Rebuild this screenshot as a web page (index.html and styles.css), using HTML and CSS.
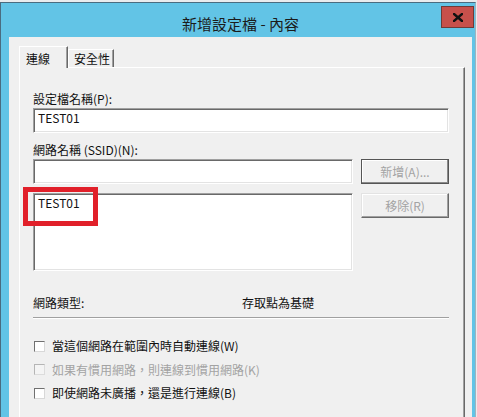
FILE: index.html
```html
<!DOCTYPE html>
<html lang="zh-Hant">
<head>
<meta charset="utf-8">
<title>新增設定檔 - 內容</title>
<link rel="stylesheet" href="styles.css">
</head>
<body>
<div class="window">
  <div class="titlebar">
    <div class="title">新增設定檔 - 內容</div>
    <div class="close" aria-label="關閉">
      <svg width="10" height="9" viewBox="0 0 10 9"><path d="M1 1 L9 8 M9 1 L1 8" stroke="#111" stroke-width="2.4" stroke-linecap="square" fill="none"/></svg>
    </div>
  </div>
  <div class="client">
    <div class="tabs">
      <div class="tab active">連線</div>
      <div class="tab">安全性</div>
    </div>
    <div class="panel">
      <div class="label">設定檔名稱(P):</div>
      <div class="field">TEST01</div>
      <div class="label gap-top">網路名稱 (SSID)(N):</div>
      <div class="ssid-grid">
        <div class="field"></div>
        <div class="btn default">新增(A)...</div>
        <div class="listwrap">
          <div class="field list"><div class="item">TEST01</div></div>
          <div class="highlight"></div>
        </div>
        <div class="btn">移除(R)</div>
      </div>
      <div class="type-row">
        <span class="type-label">網路類型:</span>
        <span>存取點為基礎</span>
      </div>
      <div class="sep"></div>
      <div class="checks">
        <div class="check"><span class="box"></span>當這個網路在範圍內時自動連線(W)</div>
        <div class="check disabled"><span class="box"></span>如果有慣用網路，則連線到慣用網路(K)</div>
        <div class="check"><span class="box"></span>即使網路未廣播，還是進行連線(B)</div>
      </div>
    </div>
  </div>
</div>
</body>
</html>
```
FILE: styles.css
```css
html, body {
  margin: 0;
  padding: 0;
}
body {
  background: #e9ecee;
  font-family: "Noto Sans CJK TC", "Noto Sans", sans-serif;
  font-size: 12px;
  line-height: 16px;
  color: #111;
  overflow: hidden;
  height: 417px;
}
.window {
  margin-top: 2px;
  box-sizing: border-box;
  width: 476px;
  height: 430px;
  background: #62c4e6;
  border-top: 1px solid #4a6c80;
  border-left: 1px solid #4a6c80;
  border-right: 1px solid #9fb3bf;
  padding: 0 3px 0 8px;
}
.titlebar {
  height: 34px;
  display: grid;
  grid-template-columns: 1fr auto 1fr;
  align-items: start;
}
.title {
  grid-column: 2;
  font-size: 15px;
  line-height: 20px;
  padding-top: 11px;
  color: #1b1b1b;
  white-space: nowrap;
}
.close {
  grid-column: 3;
  justify-self: end;
  margin-top: 3px;
  margin-right: -2px;
  width: 33px;
  height: 22px;
  box-sizing: border-box;
  background: #c7504b;
  border: 1px solid #6f3b38;
  display: flex;
  align-items: center;
  justify-content: center;
}
.client {
  background: #f0f0f0;
  height: 400px;
  padding: 9px 7px 0 10px;
}
.tabs {
  display: flex;
  align-items: flex-end;
  height: 21px;
}
.tab {
  box-sizing: border-box;
  height: 18px;
  line-height: 16px;
  padding: 1px 0 0 5px;
  width: 46px;
  border-top: 1px solid #fff;
  border-left: 1px solid #fff;
  border-right: 1px solid #696969;
  box-shadow: inset -1px 0 0 #a0a0a0;
  background: #f0f0f0;
}
.tab.active {
  height: 22px;
  width: 49px;
  padding: 4px 0 0 6px;
  margin-bottom: -1px;
  position: relative;
  z-index: 1;
}
.panel {
  border-top: 1px solid #fff;
  border-left: 1px solid #fff;
  border-right: 1px solid #696969;
  box-shadow: inset -1px 0 0 #a0a0a0;
  padding: 23px 15px 40px 13px;
}
.label {
  margin-bottom: 1px;
  white-space: nowrap;
}
.label.gap-top {
  margin-top: 9px;
}
.field {
  box-sizing: border-box;
  height: 25px;
  background: #fff;
  border-top: 1px solid #a0a0a0;
  border-left: 1px solid #a0a0a0;
  border-bottom: 1px solid #fff;
  border-right: 1px solid #fff;
  box-shadow: inset 1px 1px 0 #696969, inset -1px -1px 0 #e3e3e3;
  padding: 1px 4px 0;
  line-height: 16px;
}
.ssid-grid {
  display: grid;
  grid-template-columns: 1fr 88px;
  grid-template-rows: 25px 78px;
  column-gap: 8px;
  row-gap: 9px;
}
.listwrap {
  position: relative;
}
.field.list {
  height: 78px;
  padding: 1px 4px 0;
}
.item {
  line-height: 16px;
}
.highlight {
  position: absolute;
  left: -10px;
  top: -6px;
  width: 75px;
  height: 39px;
  box-sizing: border-box;
  border: 5px solid #e1202a;
}
.btn {
  box-sizing: border-box;
  height: 25px;
  align-self: start;
  display: flex;
  align-items: center;
  justify-content: center;
  color: #a3a3a3;
  background: #f0f0f0;
  border-top: 1px solid #e3e3e3;
  border-left: 1px solid #e3e3e3;
  border-right: 1px solid #696969;
  border-bottom: 1px solid #696969;
  box-shadow: inset -1px -1px 0 #a0a0a0, inset 1px 1px 0 #fff;
}
.btn.default {
  border: 1px solid #555;
  box-shadow: inset -1px -1px 0 #8a8a8a, inset 1px 1px 0 #fff;
}
.type-row {
  display: flex;
  margin-top: 24px;
}
.type-label {
  width: 209px;
}
.sep {
  margin-top: 6px;
  border-top: 1px solid #a0a0a0;
  border-bottom: 1px solid #fff;
}
.checks {
  margin-top: 19px;
  display: flex;
  flex-direction: column;
  gap: 7.5px;
}
.check {
  display: flex;
  align-items: center;
  white-space: nowrap;
}
.box {
  box-sizing: border-box;
  width: 11px;
  height: 11px;
  margin: 0 7px 0 1px;
  background: #fff;
  border-top: 1px solid #707070;
  border-left: 1px solid #707070;
  border-right: 1px solid #d8d8d8;
  border-bottom: 1px solid #d8d8d8;
}
.check.disabled {
  color: #a3a3a3;
}
.check.disabled .box {
  background: #f4f4f4;
  border-color: #b5b5b5 #dcdcdc #dcdcdc #b5b5b5;
}
```
